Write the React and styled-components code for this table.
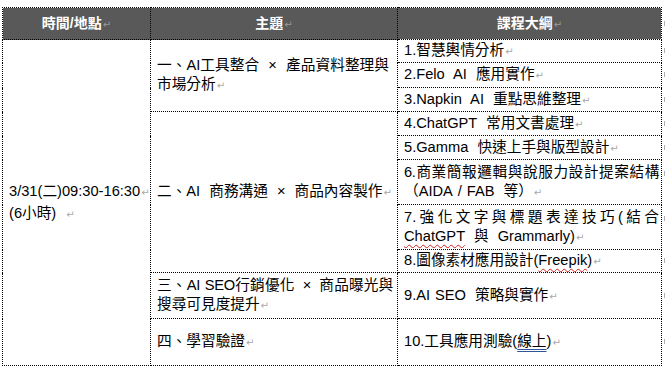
import React from "react";
import styled, { createGlobalStyle, css } from "styled-components";

const Global = createGlobalStyle`
  html, body { margin: 0; padding: 0; background: #fff; }
  body { font-family: "Liberation Sans", "Noto Sans CJK TC", sans-serif; }
`;

const Page = styled.div`
  padding: 7px 0 0 2px;
  width: 665px;
  box-sizing: border-box;
`;

const Table = styled.table`
  border-collapse: collapse;
  table-layout: fixed;
  width: 659px;
  border: 1px dotted #000;
  font-family: "Liberation Sans", "Noto Sans CJK TC", sans-serif;
  font-size: 14.67px;
  color: #000;
`;

const Row = styled.tr`
  height: ${(p) => p.$h}px;
`;

const endMark = css`
  position: relative;
  &::after {
    content: "";
    position: absolute;
    right: -5px;
    top: ${(p) => (p.$markTop != null ? `${p.$markTop}px` : "calc(50% - 3px)")};
    width: 2px;
    height: 5px;
    background: #b0b0b0;
  }
`;

const Th = styled.th`
  background: #595959;
  color: #fff;
  font-weight: bold;
  font-size: 14px;
  text-align: center;
  vertical-align: middle;
  border: 1px dotted #000;
  padding: 0;
  line-height: 19px;
  ${(p) => p.$end && endMark}
`;

const Td = styled.td`
  border: 1px dotted #000;
  padding: 0 2px 0 6px;
  vertical-align: middle;
  line-height: 19px;
  text-align: left;
  white-space: nowrap;
  word-spacing: 5px;
  ${(p) => p.$end && endMark}
`;

const Line = styled.span`
  display: block;
  white-space: nowrap;
  line-height: ${(p) => p.$lh || 19}px;
`;

const JLine = styled.span`
  display: block;
  white-space: nowrap;
  word-spacing: ${(p) => p.$ws || 0}px;
  text-align: justify;
  text-align-last: justify;
  letter-spacing: ${(p) => p.$ls || 0}px;
  margin-right: ${(p) => p.$mr || 0}px;
  line-height: ${(p) => p.$lh || 19}px;
`;

const Mark = styled.span`
  font-family: "DejaVu Sans", sans-serif;
  font-size: 10px;
  font-weight: normal;
  letter-spacing: 0;
  color: ${(p) => (p.$light ? "#9a9a9a" : "#a8a8a8")};
  margin-left: 1px;
`;

const Wavy = styled.span`
  text-decoration: underline wavy #d42020;
  text-decoration-thickness: 1px;
  text-underline-offset: 3px;
`;

const Dbl = styled.span`
  text-decoration: underline double #2f5597;
  text-decoration-thickness: 1px;
  text-underline-offset: 3px;
`;

const M = ({ light }) => <Mark $light={light}>↵</Mark>;

const S = "\u2004";

export default function App() {
  return (
    <Page>
      <Global />
      <Table>
        <colgroup>
          <col style={{ width: 148 }} />
          <col style={{ width: 247 }} />
          <col style={{ width: 264 }} />
        </colgroup>
        <thead>
          <Row $h={32}>
            <Th>時間/地點<M light /></Th>
            <Th>主題<M light /></Th>
            <Th $end>課程大綱<M light /></Th>
          </Row>
        </thead>
        <tbody>
          <Row $h={23}>
            <Td rowSpan={10}>
              <Line $lh={21}>3/31(二)09:30-16:30<M /></Line>
              <Line $lh={21}>(6小時) <M /></Line>
            </Td>
            <Td rowSpan={3}>
              <JLine $mr={6} $ws={5}>一、AI工具整合 × 產品資料整理與</JLine>
              <Line>市場分析<M /></Line>
            </Td>
            <Td $end>1.智慧輿情分析<M /></Td>
          </Row>
          <Row $h={25}>
            <Td $end>2.Felo AI 應用實作<M /></Td>
          </Row>
          <Row $h={24}>
            <Td $end>3.Napkin AI 重點思維整理<M /></Td>
          </Row>
          <Row $h={24}>
            <Td rowSpan={5}>
              <Line>二、AI 商務溝通 × 商品內容製作<M /></Line>
            </Td>
            <Td $end>4.ChatGPT 常用文書處理<M /></Td>
          </Row>
          <Row $h={24}>
            <Td $end>5.Gamma 快速上手與版型設計<M /></Td>
          </Row>
          <Row $h={45}>
            <Td $end $markTop={11}>
              <JLine $ls={-0.4}>6.商業簡報邏輯與說服力設計提案結構</JLine>
              <Line>（AIDA{S}/{S}FAB 等）<M /></Line>
            </Td>
          </Row>
          <Row $h={45}>
            <Td $end $markTop={11}>
              <JLine>7.強化文字與標題表達技巧(結合</JLine>
              <Line><Wavy>ChatGPT</Wavy> 與 Grammarly)<M /></Line>
            </Td>
          </Row>
          <Row $h={23}>
            <Td $end>8.圖像素材應用設計(<Wavy>Freepik</Wavy>)<M /></Td>
          </Row>
          <Row $h={46}>
            <Td>
              <JLine $mr={2} $ws={4} $ls={-0.25}>三、AI{S}SEO行銷優化 × 商品曝光與</JLine>
              <Line>搜尋可見度提升<M /></Line>
            </Td>
            <Td $end>9.AI{S}SEO 策略與實作<M /></Td>
          </Row>
          <Row $h={47}>
            <Td>四、學習驗證<M /></Td>
            <Td $end>10.工具應用測驗(<Dbl>線上</Dbl>)<M /></Td>
          </Row>
        </tbody>
      </Table>
    </Page>
  );
}
